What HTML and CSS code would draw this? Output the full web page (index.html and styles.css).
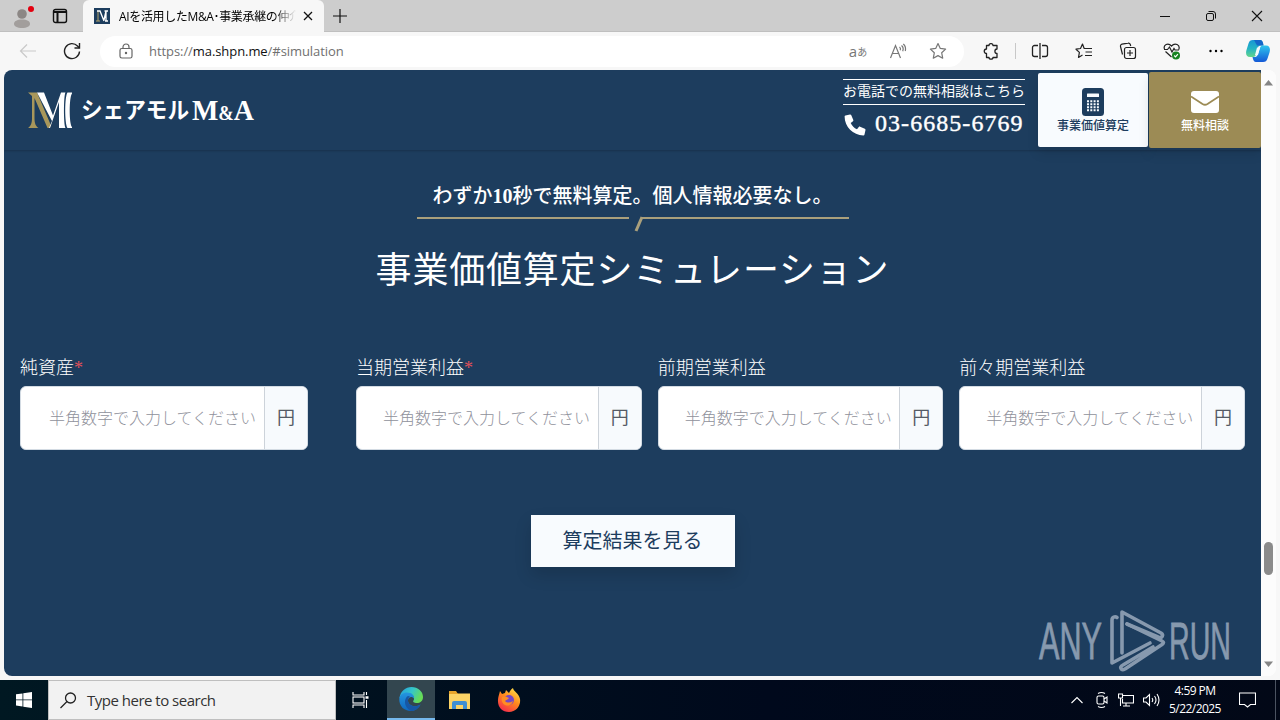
FILE: index.html
```html
<!DOCTYPE html>
<html lang="ja">
<head>
	<meta charset="utf-8">
	<title>AIを活用したM&amp;A・事業承継の仲介</title>
	<link rel="stylesheet" href="styles.css">
</head>
<body>
	<div class="tabbar">
		<div class="slot profile">
			<svg width="26" height="28" viewBox="0 0 26 28"><circle cx="12" cy="12" r="4.8" fill="#8c8785"/><path d="M4 22c0-3 3-4.500 8-4.500s8 1.500 8 4.500c0 2-3 4-8 4s-8-2-8-4z" fill="#a29e9c"/><circle cx="21" cy="7" r="3" fill="#e3000f"/></svg>
		</div>
		<div class="slot">
			<svg width="16" height="16" viewBox="0 0 16 16" fill="none" stroke="#111" stroke-width="1.400"><rect x="1.500" y="1.500" width="13" height="13" rx="2"/><path d="M2 4h12M5.500 4v10" stroke-width="2"/></svg>
		</div>
		<div class="tab">
			<svg width="16" height="16" viewBox="0 0 16 16"><rect width="16" height="16" fill="#1d3d5e"/><path d="M4 3v10M2 13h4" stroke="#b3a36a" fill="none"/><path d="M3 3h3l4 10M10 12L12 3v10M10.500 3H14M11 13h3" stroke="#fff" stroke-width="1.300" fill="none"/></svg>
			<span class="tab-title">AIを活用したM&amp;A･事業承継の仲介</span>
			<svg class="tab-close" width="10" height="10" viewBox="0 0 10 10" stroke="#111" stroke-width="1.300"><path d="M1 1l8 8M9 1L1 9"/></svg>
		</div>
		<svg class="newtab" width="14" height="14" viewBox="0 0 14 14" stroke="#111" stroke-width="1.200"><path d="M7 0v14M0 7h14"/></svg>
		<div class="window-buttons">
			<svg width="12" height="12" viewBox="0 0 12 12" fill="none" stroke="#111"><path d="M1 6.500h10"/></svg>
			<svg width="12" height="12" viewBox="0 0 12 12" fill="none" stroke="#111"><rect x="1.500" y="3.500" width="7" height="7" rx="1.500"/><path d="M3.500 1.500H8a2.500 2.500 0 0 1 2.500 2.500v4.500"/></svg>
			<svg width="12" height="12" viewBox="0 0 12 12" fill="none" stroke="#111" stroke-width="1.100"><path d="M1 1l10 10M11 1L1 11"/></svg>
		</div>
	</div>

	<div class="toolbar">
		<div class="slot back">
			<svg width="18" height="16" viewBox="0 0 18 16" fill="none" stroke="#c9c9c9" stroke-width="1.200"><path d="M17 8H1.500M8 1.500L1.500 8 8 14.500"/></svg>
		</div>
		<div class="slot">
			<svg width="18" height="18" viewBox="0 0 18 18" fill="none" stroke="#222" stroke-width="1.400"><path d="M16.500 9.500a7.500 7.500 0 1 1-2-5.500L16.500 6"/><path d="M16.500 1v5h-5"/></svg>
		</div>
		<div class="address">
			<svg class="lock" width="14" height="16" viewBox="0 0 14 16" fill="none" stroke="#666" stroke-width="1.200"><rect x="1" y="5.500" width="12" height="9.500" rx="1.800"/><path d="M4 5.500V4a3 3 0 0 1 6 0v1.500"/><circle cx="7" cy="10" r=".6" fill="#666"/></svg>
			<span class="url">https://<b>ma.shpn.me</b>/#simulation</span>
			<span class="address-icon translate">a<small>あ</small></span>
			<span class="address-icon">
				<svg width="18" height="16" viewBox="0 0 18 16" fill="none" stroke="#777" stroke-width="1.200"><path d="M1.500 15L6.500 2.500 11.500 15M3.300 10.500h6.400M10.500 4c1 .8 1.200 2 .8 3.200M12.500 2.500c1.700 1.500 2 3.700 1.200 5.700M14.300 1c2 1.800 2.700 4 2 7"/></svg>
			</span>
			<span class="address-icon">
				<svg width="18" height="18" viewBox="0 0 18 18" fill="none" stroke="#777" stroke-width="1.200" stroke-linejoin="round"><path d="M9 1.500l2.300 4.900 5.300.7-3.900 3.700 1 5.400L9 13.600l-4.700 2.600 1-5.400-3.900-3.700 5.300-.7z"/></svg>
			</span>
		</div>
		<div class="slot extensions">
			<svg width="17" height="17" viewBox="0 0 17 17" fill="none" stroke="#222" stroke-width="1.300" stroke-linejoin="round"><path d="M3.500 2.500H6c0-2.500 4-2.500 4 0h4V6c-2.800 0-2.800 4.500 0 4.500v4h-4c0 2.200-4 2.200-4 0H3.500v-4C.500 10.500.500 6 3.500 6z"/></svg>
		</div>
		<div class="divider"></div>
		<div class="slot">
			<svg width="18" height="16" viewBox="0 0 18 16" fill="none" stroke="#222" stroke-width="1.300"><path d="M7 2.500H3.500a2 2 0 0 0-2 2v7a2 2 0 0 0 2 2H7M11 2.500h3.500a2 2 0 0 1 2 2v7a2 2 0 0 1-2 2H11M9 0v16"/></svg>
		</div>
		<div class="slot">
			<svg width="18" height="16" viewBox="0 0 18 16" fill="none" stroke="#222" stroke-width="1.200" stroke-linejoin="round"><path d="M11 5.500H9.200L7.500 1 5.500 5.500l-4.500.7 3.400 3.200-.9 5 4-2.300M11 5.500h6M10.500 9H17M10 12.500h7"/></svg>
		</div>
		<div class="slot">
			<svg width="18" height="18" viewBox="0 0 18 18" fill="none" stroke="#222" stroke-width="1.200"><rect x="5.500" y="5.500" width="11" height="11" rx="2"/><path d="M11 8v6M8 11h6M3.500 12.500l-2-8a2 2 0 0 1 1.500-2.400L9 1.200a2 2 0 0 1 2.300 1.300l.4 1.500"/></svg>
		</div>
		<div class="slot">
			<svg width="18" height="18" viewBox="0 0 18 18" fill="none" stroke="#222" stroke-width="1.200"><path d="M1.500 7C0 3 5 0 8.500 4c3.500-4 9-1 7.300 3.500M2.500 9.500L8.500 15M1 7.500h3.500l2-2.500 2.500 5 2-3.500 1 1.500h4"/><circle cx="13" cy="13.500" r="4" fill="#168321" stroke="none"/><path d="M11.200 13.500l1.300 1.300 2.400-2.600" stroke="#fff"/></svg>
		</div>
		<div class="slot">
			<svg width="14" height="4" viewBox="0 0 14 4"><circle cx="1.500" cy="2" r="1.200"/><circle cx="7" cy="2" r="1.200"/><circle cx="12.500" cy="2" r="1.200"/></svg>
		</div>
		<div class="slot copilot">
			<svg width="24" height="22" viewBox="0 0 24 22">
				<defs>
					<linearGradient id="cp1" x1="0" y1="0" x2="0" y2="1"><stop offset="0" stop-color="#1796d4"/><stop offset=".5" stop-color="#24b3c4"/><stop offset="1" stop-color="#63d58b"/></linearGradient>
					<linearGradient id="cp2" x1="0" y1="0" x2="0" y2="1"><stop offset="0" stop-color="#2ec5ee"/><stop offset="1" stop-color="#1459d6"/></linearGradient>
				</defs>
				<path d="M7 0h7c2 0 2.500 1.500 3 3l.5 2.500h-3c-1.500 0-2.300 1-2.700 2.500L10 14.500C9.500 16 8.800 17 7 17H4c-4 0-4.500-4-3.500-7l2-6.500C3.200 1 4.500 0 7 0z" fill="url(#cp1)"/>
				<path d="M8 0h6c2 0 2.500 1.500 3 3l.5 2.500H11z" fill="#1467c9"/>
				<path d="M17 22h-7c-2 0-2.500-1.500-3-3l-.5-2H9c1.500 0 2.300-1 2.800-2.500L14 8c.5-1.500 1.200-2.500 3-2.500h3c4 0 4.500 4 3.500 7l-2 6c-.7 2.500-2 3.500-4.500 3.500z" fill="url(#cp2)"/>
				<path d="M11 7.500h3L12 15H9z" fill="#f2fafc"/>
			</svg>
		</div>
	</div>

	<div class="viewport">
		<div class="page">
			<header class="header">
				<svg class="logo" width="232" height="42" viewBox="0 0 232 42">
					<path d="M0 2.500h9l14 33-2 2.500h-1.500L6.500 8v20c0 5 1 8 4 10H0c3-2 4-5 4-10V6z" fill="#a8975b"/>
					<path d="M9 2.500h7l9 23 8-23h4.500c-2 3-2 32 0 35.500H31V12l-9 26h-1l3-7z" fill="#fff"/>
					<path d="M44 2.500h-4.500c-3 4-3 31 0 35.500H44v-1c-3-3-3-30 0-33.500z" fill="#fff"/>
					<text class="logo-kana" x="53" y="28" textLength="108" lengthAdjust="spacingAndGlyphs">シェアモル</text>
					<text class="logo-latin" x="164" y="30" textLength="62" lengthAdjust="spacingAndGlyphs">M<tspan font-size="20">&amp;</tspan>A</text>
				</svg>
				<div class="tel">
					<p class="tel-label">お電話での無料相談はこちら</p>
					<p class="tel-number">
						<svg width="22" height="22" viewBox="0 0 22 22"><path d="M1.500 1.500L6 .5c.6-.1 1 .2 1.300.7l2 4.700c.2.500 0 1-.3 1.300L6.700 9c1.400 2.900 3.400 4.900 6.300 6.300l1.800-2.300c.3-.4.800-.5 1.300-.3l4.700 2c.5.200.8.700.7 1.300l-1 4.500c-.1.500-.5.900-1.100.9C9 21.400.6 13 .6 2.600c0-.6.400-1 .9-1.100z" fill="#fff"/></svg>
						<span>03-6685-6769</span>
					</p>
				</div>
				<a class="header-button white">
					<svg width="22" height="28" viewBox="0 0 22 28"><rect width="22" height="28" rx="3.500" fill="#1d3d5e"/><rect x="5" y="5.500" width="12" height="3.500" rx=".5" fill="#f8fbfe"/><path d="M5 13.200h12M5 16.200h12M5 19.200h12M5 22.200h12" stroke="#f8fbfe" stroke-width="2" stroke-dasharray="2 1.300"/></svg>
					<span>事業価値算定</span>
				</a>
				<a class="header-button gold">
					<svg width="28" height="22" viewBox="0 0 28 22"><rect width="28" height="22" rx="3" fill="#fff"/><path d="M0 5.500l11.500 7.500c1.700 1 3.300 1 5 0L28 5.500" fill="none" stroke="#9c8b55" stroke-width="1.800"/></svg>
					<span>無料相談</span>
				</a>
			</header>

			<main class="simulation">
				<p class="lead">わずか<b>10</b>秒で無料算定。個人情報必要なし。</p>
				<svg class="lead-line" width="432" height="16" viewBox="0 0 432 16" fill="none" stroke="#aaa07c" stroke-width="2"><path d="M0 2h212M432 2H225"/><path d="M225 1l-6 14" stroke-width="3"/></svg>
				<h1>事業価値算定シミュレーション</h1>
				<form class="fields">
					<div class="field">
						<label>純資産<i>*</i></label>
						<div class="input-group"><input type="text" placeholder="半角数字で入力してください"><span>円</span></div>
					</div>
					<div class="profits">
						<div class="field">
							<label>当期営業利益<i>*</i></label>
							<div class="input-group"><input type="text" placeholder="半角数字で入力してください"><span>円</span></div>
						</div>
						<div class="field">
							<label>前期営業利益</label>
							<div class="input-group"><input type="text" placeholder="半角数字で入力してください"><span>円</span></div>
						</div>
						<div class="field">
							<label>前々期営業利益</label>
							<div class="input-group"><input type="text" placeholder="半角数字で入力してください"><span>円</span></div>
						</div>
					</div>
				</form>
				<button class="submit" type="button">算定結果を見る</button>
			</main>
		</div>
		<div class="scrollbar">
			<svg width="9" height="6" viewBox="0 0 9 6"><path d="M0 5.500L4.500 0 9 5.500z" fill="#858585"/></svg>
			<div class="thumb"></div>
			<svg width="9" height="6" viewBox="0 0 9 6"><path d="M0 .5L4.500 6 9 .5z" fill="#858585"/></svg>
		</div>
		<svg class="watermark" width="210" height="66" viewBox="0 0 210 66">
			<text x="5" y="50" textLength="63" lengthAdjust="spacingAndGlyphs">ANY</text>
			<text x="135" y="50" textLength="62" lengthAdjust="spacingAndGlyphs">RUN</text>
			<g fill="none" stroke="#8799ae" stroke-width="3.600" stroke-linejoin="round" stroke-linecap="round">
				<path d="M83 8.500c-2-1.500-5-.5-5 2.500v43l38-20"/>
				<path d="M88 44V3l39 21c3 2 1 6-3 4L93 15"/>
				<path d="M93 15l35 17c2 1 2 2 0 3.500L91 60c-4 2-6-2-2-4l30-18"/>
			</g>
		</svg>
	</div>

	<div class="taskbar">
		<div class="start">
			<svg width="16" height="16" viewBox="0 0 16 16" fill="#fff"><path d="M0 2.300l6.500-.9v6.100H0zM7.300 1.300L16 0v7.500H7.300zM0 8.300h6.500v6.200L0 13.600zM7.300 8.300H16V16l-8.700-1.300z"/></svg>
		</div>
		<div class="search">
			<svg width="17" height="17" viewBox="0 0 17 17" fill="none" stroke="#222" stroke-width="1.300"><circle cx="10.500" cy="6" r="5"/><path d="M7 9.500L.5 16"/></svg>
			<span>Type here to search</span>
		</div>
		<div class="task">
			<svg width="17" height="16" viewBox="0 0 17 16" fill="none" stroke="#fff" stroke-width="1.100"><path d="M1 0v3h11V0M1 16v-3h11v3M14.500 0v3M14.500 8v8"/><rect x="1" y="5" width="11" height="6"/><path d="M13.500 5.500h3" stroke-width="2.500"/></svg>
		</div>
		<div class="task active">
			<svg width="24" height="24" viewBox="0 0 24 24">
				<defs>
					<linearGradient id="edge1" x1="0" y1="0" x2="1" y2=".4"><stop offset="0" stop-color="#239de0"/><stop offset=".55" stop-color="#35c6c9"/><stop offset="1" stop-color="#67dc57"/></linearGradient>
					<linearGradient id="edge2" x1="0" y1="0" x2="0" y2="1"><stop offset="0" stop-color="#2496e0"/><stop offset="1" stop-color="#0f67be"/></linearGradient>
				</defs>
				<path d="M.5 11C1.500 4 6.500 0 12.500 0 19 0 24 4.500 24 10c0 4-3 6-6 6s-4.500-1-3.500-2.500C16.500 10 13 7.500 9 8 5 8.500 2 9.500.5 11z" fill="url(#edge1)"/>
				<path d="M.3 12C.5 8 4 5.500 8 5.500c5 0 7.500 3 7 6-2-3-6-1.500-6 2 0 4.500 6.500 8 12.500 4-2 4-5.500 6.500-9.500 6.500C5 24 0 19 .3 12z" fill="url(#edge2)"/>
				<path d="M9 9c-4 2-5 11 3 15 4 0 7.500-2.500 9.500-6.500-6 4-12.500.5-12.500-4 0-1.500.5-3 2-4z" fill="#1757a5"/>
			</svg>
		</div>
		<div class="task">
			<svg width="21" height="18" viewBox="0 0 21 18"><path d="M0 2.500h21V18H0z" fill="#fbd365"/><path d="M0 3V0h7l2 3z" fill="#e7a52b"/><path d="M3 18v-6q0-2 2-2h11q2 0 2 2v6h-4v-4H7v4z" fill="#3f8fd2"/></svg>
		</div>
		<div class="task">
			<svg width="24" height="24" viewBox="0 0 24 24">
				<defs><linearGradient id="fox" x1=".8" y1="0" x2=".2" y2="1"><stop offset="0" stop-color="#ffe14a"/><stop offset=".45" stop-color="#ff8a1d"/><stop offset="1" stop-color="#f4264f"/></linearGradient></defs>
				<path d="M3 3l2 3 3-1 1-3 3 3c1-2 2-4 4-5 0 3 6 5 7 11 1 7-4 13-11 13S.5 19 1 12C1 9 2 7 3 3z" fill="url(#fox)"/>
				<circle cx="12" cy="12" r="5" fill="#7648c4"/>
				<path d="M5 9c3-1 5 0 7 1-1 2-3 1.500-4 3 2 2 5 2 8 0-1 4-5 5.500-8 4s-4-5-3-8z" fill="#ff8d24"/>
			</svg>
		</div>
		<div class="tray">
			<svg width="12" height="8" viewBox="0 0 12 8"><path d="M.5 7L6 1.500 11.500 7"/></svg>
			<svg width="14" height="18" viewBox="0 0 14 18"><rect x="2" y="5" width="7" height="8" rx="1.500"/><path d="M9 8l3-2v6l-3-2M3 2.500q3.500-2 7 0M3 15.500q3.500 2 7 0"/></svg>
			<svg width="16" height="14" viewBox="0 0 16 14"><path d="M5 2.500h10.500v7.500H4.500V6M8 10v3M5 13h7M.5 1h4v4h-4zM2.500 5v8"/></svg>
			<svg width="17" height="14" viewBox="0 0 17 14"><path d="M.5 5v4H3l3.500 3.500v-11L3 5zM9 5q1.500 2 0 4M11.500 3q3 4 0 8M14 1q4 6 0 12"/></svg>
			<div class="clock">4:59 PM<br>5/22/2025</div>
			<svg width="17" height="16" viewBox="0 0 17 16"><path d="M.5 1h16v11.500h-5L8.500 15l-3-2.500h-5z"/></svg>
			<div class="show-desktop"></div>
		</div>
	</div>
</body>
</html>
```
FILE: styles.css
```css
* {
	box-sizing: border-box;
}

body {
	margin: 0;
	width: 1280px;
	height: 720px;
	display: flex;
	flex-direction: column;
	overflow: hidden;
	background: #f7f7f7;
	font-family: "Open Sans", "Noto Sans CJK JP", sans-serif;
}

svg {
	display: block;
	flex: none;
}

p, h1 {
	margin: 0;
	font-weight: normal;
}

.slot {
	width: 44px;
	display: flex;
	align-items: center;
	justify-content: center;
}

/* browser chrome */
.tabbar {
	height: 32px;
	display: flex;
	align-items: stretch;
	background: #cdcdcd;
	border-bottom: 1px solid #bfbfbf;
}

.tabbar .slot {
	width: 38px;
}

.tabbar .profile {
	width: 41px;
	padding-left: 5px;
}

.tab {
	width: 241px;
	height: 32px;
	margin-left: 4px;
	padding: 0 11px;
	display: flex;
	align-items: center;
	background: #f7f7f7;
	border-radius: 6px 6px 0 0;
}

.tab-title {
	width: 177px;
	margin-left: 9px;
	overflow: hidden;
	white-space: nowrap;
	font-size: 12px;
	letter-spacing: -0.35px;
	-webkit-mask-image: linear-gradient(to right, #000 155px, transparent);
	mask-image: linear-gradient(to right, #000 155px, transparent);
}

.tab-close {
	margin-left: 7px;
}

.newtab {
	margin: 9px 0 0 9px;
}

.window-buttons {
	width: 138px;
	margin-left: auto;
	display: flex;
	align-items: center;
	justify-content: space-around;
}

.toolbar {
	height: 38px;
	display: flex;
	align-items: center;
	background: #f7f7f7;
}

.back {
	margin-left: 6px;
}

.address {
	width: 864px;
	height: 31px;
	margin-left: 6px;
	padding: 0 6px 0 19px;
	display: flex;
	align-items: center;
	background: #fff;
	border-radius: 16px;
}

.url {
	margin-left: 16px;
	flex: 1;
	font-size: 13px;
	letter-spacing: -0.07px;
	color: #707070;
}

.url b {
	font-weight: normal;
	color: #111;
}

.address-icon {
	width: 40px;
	display: flex;
	align-items: center;
	justify-content: center;
	color: #777;
}

.translate {
	font-size: 15px;
}

.translate small {
	font-size: 10px;
}

.slot.extensions {
	margin-left: 5px;
}

.divider {
	width: 1px;
	height: 16px;
	margin: 0 2px;
	background: #c8c8c8;
}

.slot.copilot {
	width: 40px;
}

/* web page */
.viewport {
	position: relative;
	height: 606px;
	margin: 0 4px 4px;
	display: flex;
	overflow: hidden;
	border-radius: 8px;
	background: #fff;
}

.page {
	width: 1257px;
	background: #1d3d5e;
	color: #fff;
	font-family: "Liberation Serif", "Noto Sans CJK JP", serif;
}

.header {
	height: 80px;
	display: flex;
	align-items: flex-start;
	box-shadow: 0 1px 2px rgba(0, 0, 0, 0.2);
}

.logo {
	margin: 20px auto 0 24px;
}

.logo-kana {
	font-size: 23px;
	font-weight: bold;
	fill: #fff;
}

.logo-latin {
	font-size: 30px;
	font-weight: bold;
	fill: #fff;
}

.tel {
	width: 182px;
	margin: 9px 13px 0 0;
}

.tel-label {
	height: 26px;
	border-top: 1px solid #fff;
	border-bottom: 1px solid #fff;
	font-size: 14px;
	line-height: 23px;
	white-space: nowrap;
}

.tel-number {
	display: flex;
	align-items: center;
	margin-top: 3px;
	padding-left: 1px;
	gap: 9px;
	font-size: 24px;
	line-height: 30px;
	letter-spacing: 1.05px;
	white-space: nowrap;
	-webkit-text-stroke: 0.4px #fff;
}

.tel-number svg {
	margin-top: 4px;
}

.header-button {
	display: flex;
	flex-direction: column;
	align-items: center;
	font-size: 12px;
	line-height: 18px;
	font-weight: 500;
}

.white {
	width: 110px;
	height: 74px;
	margin: 3px 1px 0 0;
	padding-top: 15px;
	border-radius: 2px;
	background: #f8fbfe;
	color: #1d3d5e;
	box-shadow: 0 6px 12px rgba(0, 0, 0, 0.1);
}

.white span {
	margin-top: 1px;
}

.gold {
	width: 112px;
	height: 76px;
	margin-top: 2px;
	padding-top: 19px;
	border-radius: 2px;
	background: #9c8b55;
	box-shadow: 0 6px 12px rgba(0, 0, 0, 0.1);
}

.gold span {
	margin-top: 4px;
}

.simulation {
	padding: 31px 16px 0;
	display: flex;
	flex-direction: column;
	align-items: center;
}

.lead {
	height: 30px;
	font-size: 20px;
	line-height: 30px;
	font-weight: 500;
}

.lead b {
	font-weight: bold;
}

.lead-line {
	margin-top: 5px;
}

h1 {
	margin-top: 12px;
	font-size: 36px;
	line-height: 54px;
	letter-spacing: 0.8px;
	font-weight: 400;
}

.fields {
	width: 1225px;
	margin-top: 57px;
	display: grid;
	grid-template-columns: 288px 1fr;
	gap: 48px;
}

.profits {
	display: grid;
	grid-template-columns: repeat(3, 1fr);
	gap: 16px;
}

.field label {
	display: block;
	height: 31px;
	font-size: 18px;
	line-height: 27px;
	font-weight: 300;
}

.field i {
	font-style: normal;
	color: #e0505a;
}

.input-group {
	height: 64px;
	display: flex;
	overflow: hidden;
	border: 1px solid #d3dbe3;
	border-radius: 6px;
	background: #fff;
}

.input-group input {
	flex: 1;
	min-width: 0;
	padding: 2px 0 0 28px;
	border: 0;
	background: transparent;
	font-family: inherit;
	font-size: 16px;
	font-weight: 300;
}

.profits input {
	padding-left: 26px;
}

.input-group input::placeholder {
	color: #8f919b;
}

.input-group span {
	width: 43px;
	border-left: 1px solid #cdd3da;
	background: #f7fafd;
	color: #555b66;
	font-size: 18px;
	line-height: 62px;
	text-align: center;
}

.submit {
	width: 204px;
	height: 52px;
	margin-top: 65px;
	padding: 0 0 3px;
	border: 0;
	background: #f8fbfe;
	color: #1d3d5e;
	font-family: inherit;
	font-size: 20px;
	font-weight: 400;
	box-shadow: 0 8px 16px rgba(0, 0, 0, 0.14);
}

.scrollbar {
	width: 15px;
	padding: 10px 0 9px;
	display: flex;
	flex-direction: column;
	align-items: center;
	background: #fcfcfc;
}

.thumb {
	width: 9px;
	height: 33px;
	margin: 456px 0 auto;
	border-radius: 5px;
	background: #8b8b8b;
}

.watermark {
	position: absolute;
	left: 1030px;
	top: 539px;
}

.watermark text {
	font-family: "Liberation Sans", sans-serif;
	font-size: 52px;
	fill: #8799ae;
	stroke: #8799ae;
	stroke-width: 0.8px;
}

/* windows taskbar */
.taskbar {
	height: 40px;
	display: flex;
	background: linear-gradient(to right, #001822, #00091c 60%, #020817);
}

.start {
	width: 48px;
	display: flex;
	align-items: center;
	justify-content: center;
}

.search {
	width: 288px;
	padding-left: 11px;
	display: flex;
	align-items: center;
	gap: 10px;
	background: #f2f2f2;
	border: 1px solid #bfbfbf;
	color: #333;
	font-size: 15px;
	letter-spacing: -0.5px;
}

.task {
	width: 49px;
	display: flex;
	align-items: center;
	justify-content: center;
}

.task.active {
	margin-left: 2px;
	width: 48px;
	background: #33464f;
	border-bottom: 2px solid #76b9ed;
}

.tray {
	margin-left: auto;
	display: flex;
	align-items: center;
	color: #fff;
}

.tray > svg {
	margin-right: 9px;
	fill: none;
	stroke: #fff;
	stroke-width: 1.1;
}

.tray > svg:first-child {
	margin-right: 12px;
}

.clock {
	width: 52px;
	margin-right: 18px;
	font-size: 12px;
	line-height: 18px;
	letter-spacing: -0.55px;
	text-align: center;
	white-space: nowrap;
}

.show-desktop {
	width: 5px;
	height: 40px;
	margin-left: 10px;
	border-left: 1px solid #4b5361;
}
```
